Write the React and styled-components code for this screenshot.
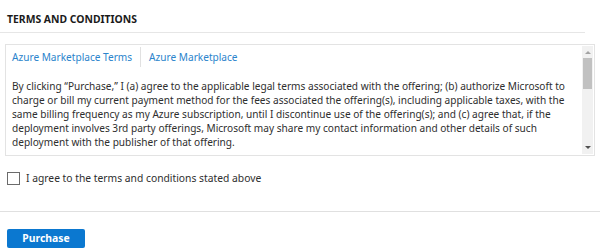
import React from "react";
import styled, { createGlobalStyle } from "styled-components";

const Global = createGlobalStyle`
  html, body { margin: 0; padding: 0; background: #ffffff; }
  body { font-family: "Noto Sans", "Open Sans", sans-serif; color: #323130; }
  * { box-sizing: border-box; }
`;

const Page = styled.div`
  width: 600px;
  height: 252px;
  display: flex;
  flex-direction: column;
  padding-top: 12px;
`;

const Heading = styled.h2`
  margin: 0;
  padding: 0 7px;
  font-size: 10.4px;
  line-height: 14px;
  font-weight: 700;
  color: #1b1b1b;
`;

const Divider = styled.div`
  height: 1px;
  background: #e6e6e6;
  margin: ${(p) => p.$margin};
`;

const TermsBox = styled.div`
  margin: 11px 5px 0 5px;
  height: 112px;
  border: 1px solid #e3e3e3;
  display: flex;
  background: #fff;
`;

const TermsContent = styled.div`
  flex: 1;
  overflow: hidden;
  padding: 5px 6px 0 6px;
`;

const Tabs = styled.div`
  display: flex;
  align-items: center;
  height: 14px;
`;

const Tab = styled.a`
  font-size: 10.1px;
  line-height: 14px;
  color: #2b84cc;
  text-decoration: none;
  padding-right: ${(p) => (p.$first ? "8px" : "0")};
  padding-left: ${(p) => (p.$first ? "0" : "8px")};
  border-right: ${(p) => (p.$first ? "1px solid #e1e1e1" : "none")};
  height: 20px;
  display: flex;
  align-items: center;
`;

const Body = styled.p`
  margin: 15px 0 0 0;
  font-size: 10.1px;
  line-height: 14px;
  color: #2e2e2e;
  white-space: pre;
`;

const ScrollTrack = styled.div`
  width: 11px;
  margin: 1px 1px 1px 0;
  background: #f1f1f1;
  display: flex;
  flex-direction: column;
  align-items: center;
`;

const Arrow = styled.div`
  width: 0;
  height: 0;
  border-left: 3px solid transparent;
  border-right: 3px solid transparent;
  ${(p) =>
    p.$up
      ? "border-bottom: 3px solid #a3a3a3; margin: 5px 0 4px;"
      : "border-top: 3px solid #505050; margin: auto 0 5px;"}
`;

const Thumb = styled.div`
  width: 9px;
  height: 31px;
  background: #c1c1c1;
`;

const AgreeRow = styled.label`
  display: flex;
  align-items: center;
  gap: 6px;
  margin: 15px 0 0 7px;
  font-size: 10.3px;
  line-height: 14px;
  color: #2e2e2e;
`;

const Box = styled.span`
  width: 13px;
  height: 13px;
  flex: none;
  border: 1px solid #6b6b6b;
  background: #fff;
`;

const Footer = styled.div`
  margin-top: 26px;
  border-top: 1px solid #e0e0e0;
  padding: 13px 7px 0 7px;
`;

const PurchaseButton = styled.button`
  width: 78px;
  height: 19px;
  border: none;
  border-radius: 2px;
  background: #0b78d0;
  color: #ffffff;
  font-family: "Noto Sans", "Open Sans", sans-serif;
  font-size: 10.4px;
  font-weight: 700;
  line-height: 19px;
  padding: 0;
`;

const terms =
  "By clicking \u201cPurchase,\u201d I (a) agree to the applicable legal terms associated with the offering; (b) authorize Microsoft to\n" +
  "charge or bill my current payment method for the fees associated the offering(s), including applicable taxes, with the\n" +
  "same billing frequency as my Azure subscription, until I discontinue use of the offering(s); and (c) agree that, if the\n" +
  "deployment involves 3rd party offerings, Microsoft may share my contact information and other details of such\n" +
  "deployment with the publisher of that offering.";

export default function App() {
  return (
    <>
      <Global />
      <Page>
        <Heading>TERMS AND CONDITIONS</Heading>
        <Divider $margin="6px 15px 0 0" />
        <TermsBox>
          <TermsContent>
            <Tabs>
              <Tab $first href="#">Azure Marketplace Terms</Tab>
              <Tab href="#">Azure Marketplace</Tab>
            </Tabs>
            <Body>{terms}</Body>
          </TermsContent>
          <ScrollTrack>
            <Arrow $up />
            <Thumb />
            <Arrow />
          </ScrollTrack>
        </TermsBox>
        <AgreeRow>
          <Box />
          <span>I agree to the terms and conditions stated above</span>
        </AgreeRow>
        <Footer>
          <PurchaseButton>Purchase</PurchaseButton>
        </Footer>
      </Page>
    </>
  );
}
